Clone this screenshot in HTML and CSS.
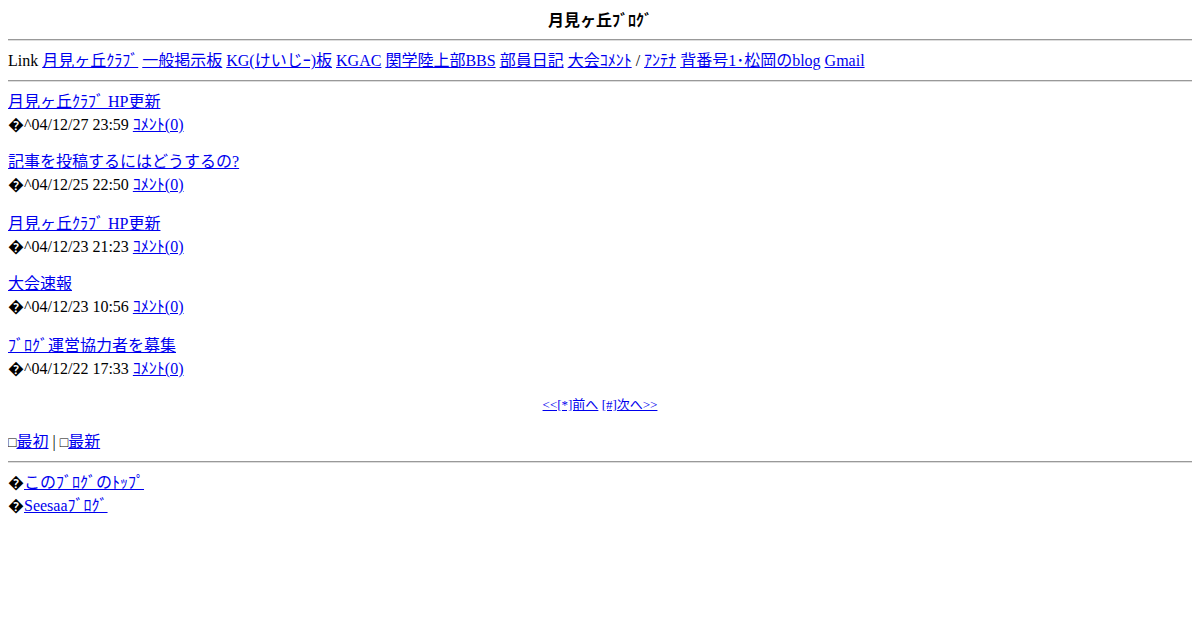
FILE: index.html
```html
<!DOCTYPE html>
<html lang="ja">
<head>
<meta charset="UTF-8" />
<title>月見ヶ丘ﾌﾞﾛｸﾞ</title>
<link rel="stylesheet" href="styles.css">
</head>
<body>

<div class="title">月見ヶ丘ﾌﾞﾛｸﾞ</div>
<hr>
<div class="links">Link <a href="#">月見ヶ丘ｸﾗﾌﾞ</a> <a href="#">一般掲示板</a> <a href="#">KG(けいじｰ)板</a> <a href="#">KGAC</a> <a href="#">関学陸上部BBS</a> <a href="#">部員日記</a> <a href="#">大会ｺﾒﾝﾄ</a> / <a href="#">ｱﾝﾃﾅ</a> <a href="#">背番号1･松岡のblog</a> <a href="#">Gmail</a></div>
<hr>

<div class="entry">
  <a href="#">月見ヶ丘ｸﾗﾌﾞ HP更新</a><br>
  �^04/12/27 23:59 <a href="#">ｺﾒﾝﾄ(0)</a>
</div>
<div class="entry wide">
  <a href="#">記事を投稿するにはどうするの?</a><br>
  �^04/12/25 22:50 <a href="#">ｺﾒﾝﾄ(0)</a>
</div>
<div class="entry">
  <a href="#">月見ヶ丘ｸﾗﾌﾞ HP更新</a><br>
  �^04/12/23 21:23 <a href="#">ｺﾒﾝﾄ(0)</a>
</div>
<div class="entry wide">
  <a href="#">大会速報</a><br>
  �^04/12/23 10:56 <a href="#">ｺﾒﾝﾄ(0)</a>
</div>
<div class="entry">
  <a href="#">ﾌﾞﾛｸﾞ運営協力者を募集</a><br>
  �^04/12/22 17:33 <a href="#">ｺﾒﾝﾄ(0)</a>
</div>

<div class="pager"><a href="#">&lt;&lt;[*]前へ</a> <a href="#">[#]次へ&gt;&gt;</a></div>

<div class="nav"><span class="box">□</span><a href="#">最初</a> | <span class="box">□</span><a href="#">最新</a></div>
<hr>
<div class="footer">
  �<a href="#">このﾌﾞﾛｸﾞのﾄｯﾌﾟ</a><br>
  �<a href="#">Seesaaﾌﾞﾛｸﾞ</a>
</div>

</body>
</html>
```

FILE: styles.css
```css
body { font-family: "Liberation Serif", "Noto Sans CJK JP", serif; font-size: 16px; color: #000; margin: 8px; }
a { color: #0000ee; }
hr { margin: 8px 0; border: 0; border-top: 1px solid #999; border-bottom: 1px solid #ddd; }

.title { text-align: center; font-weight: bold; font-family: "Noto Sans CJK JP", sans-serif; font-size: 16px; line-height: 23px; }
.links { line-height: 23px; }

.entry { line-height: 23px; margin-bottom: 14px; }
.entry.wide { margin-bottom: 16px; }

.pager { text-align: center; font-size: 13px; margin: 14px 0 17px; }

.nav { line-height: 23px; margin-bottom: -1px; }
.box { font-size: 14px; }

.footer { line-height: 23px; }
```
